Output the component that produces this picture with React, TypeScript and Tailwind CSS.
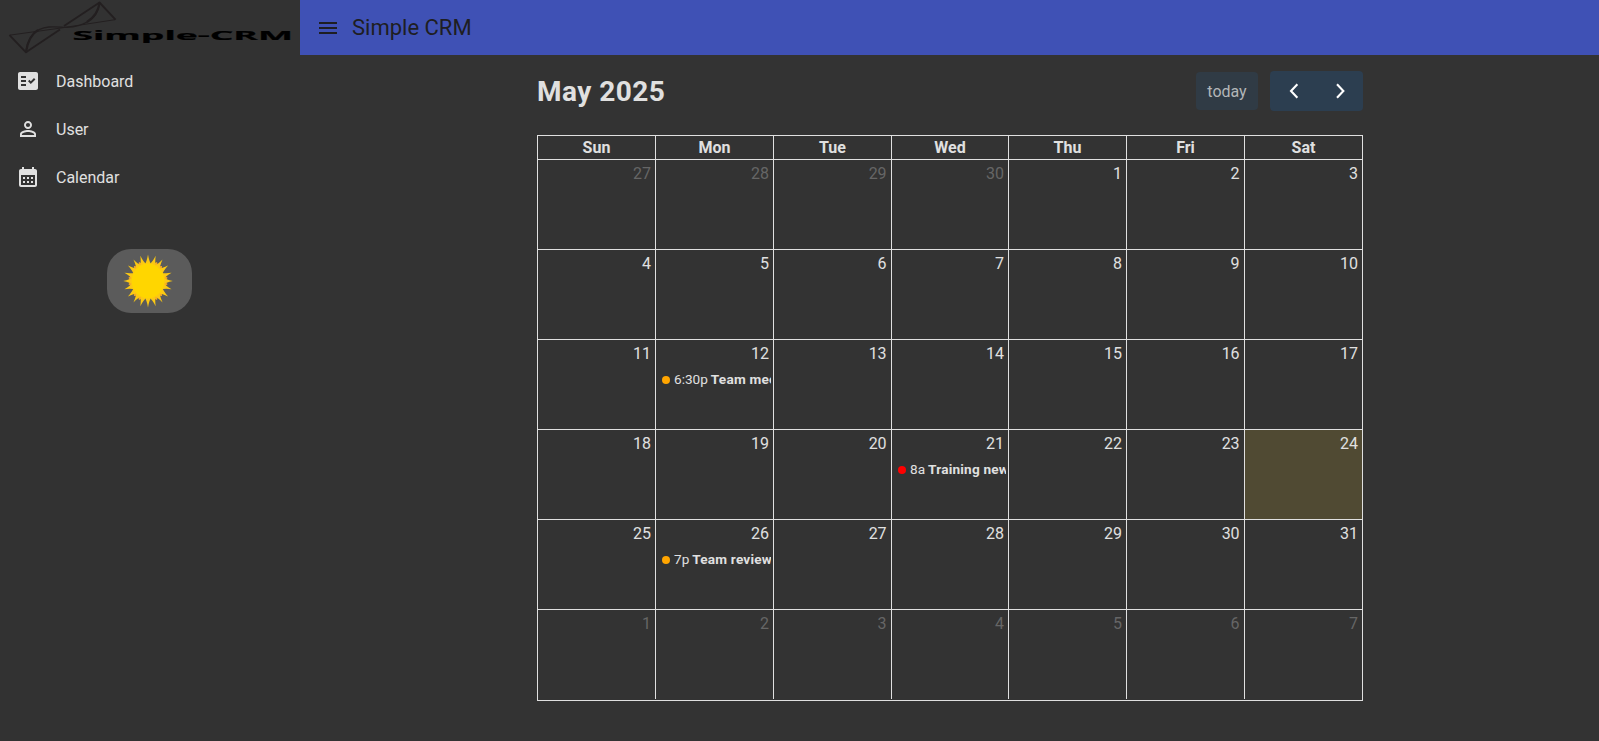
import React from "react";
import { MdFactCheck, MdPersonOutline, MdCalendarMonth, MdMenu } from "react-icons/md";

type CalendarEvent = { time: string; title: string; dot: string };

const weekdays = ["Sun", "Mon", "Tue", "Wed", "Thu", "Fri", "Sat"];

const events: Record<number, CalendarEvent> = {
  12: { time: "6:30p", title: "Team meeting", dot: "bg-[#ffa500]" },
  21: { time: "8a", title: "Training new staff", dot: "bg-[#ff0000]" },
  26: { time: "7p", title: "Team review", dot: "bg-[#ffa500]" },
};

const days = Array.from({ length: 42 }, (_, i) => {
  const offset = i - 3;
  if (offset < 1) return { day: 30 + offset, other: true };
  if (offset > 31) return { day: offset - 31, other: true };
  return { day: offset, other: false };
});
const weeks = Array.from({ length: 6 }, (_, w) => days.slice(w * 7, w * 7 + 7));

const columns = "grid grid-cols-[117px_117px_117px_116px_117px_117px_117px] gap-x-px";

function Logo() {
  return (
    <svg width="300" height="55" viewBox="0 0 300 55" fill="none" className="block">
      <g stroke="#231f20" strokeLinejoin="round">
        <path d="M9.5 35.2 L26 52.3 L60 29.5 M64 26 L99.5 2.5 L115.5 19.6" strokeWidth="1.9" />
        <path d="M9.5 35.2 L61 28 L115.5 19.6" strokeWidth="1" />
        <path d="M26 52 C27 40 33 28.5 49 27 C62 26 67 29.5 79 25.5 C93 21 98 14 99.5 3" strokeWidth="1.3" />
        <path d="M26 52 C27.5 43 31 34 38 30" strokeWidth="2.1" />
        <path d="M87 22 C95 17 98.5 10 99.5 3" strokeWidth="2.1" />
      </g>
      <text
        x="72.5"
        y="39.6"
        fontSize="12.4"
        fontWeight="700"
        fill="#000"
        stroke="#000"
        strokeWidth="0.2"
        textLength="220.5"
        lengthAdjust="spacingAndGlyphs"
        className="font-['Open_Sans',sans-serif]"
      >
        Simple-CRM
      </text>
    </svg>
  );
}

const rays = Array.from({ length: 20 }, (_, i) => i * 18);
const backRays = [27, 45, 81, 99, 135, 153].flatMap((a) => [a, -a]);

function Sun() {
  return (
    <svg width="50" height="54" viewBox="-25 -27 50 54" className="mr-[3px] block">
      <g transform="scale(1.02 1.09)">
        {backRays.map((a) => (
          <path key={a} d="M-4.5 -14 L0 -19.5 L4.5 -14 Z" fill="#f9a825" transform={`rotate(${a})`} />
        ))}
        {rays.map((a) => (
          <path key={a} d="M-3.6 -14.5 Q-1.2 -17.5 0 -24.3 Q1.2 -17.5 3.6 -14.5 Z" fill="#fcc913" transform={`rotate(${a})`} />
        ))}
        <circle r="16" fill="#ffd600" />
      </g>
    </svg>
  );
}

function NavItem({ icon, label }: { icon: React.ReactNode; label: string }) {
  return (
    <a className="flex h-12 items-center gap-4 px-4 text-base text-[#e0e0e0]">
      {icon}
      <span className="pt-[2px]">{label}</span>
    </a>
  );
}

function Chevron({ d }: { d: string }) {
  return (
    <svg width="24" height="24" viewBox="0 0 32 32" fill="none" stroke="#fff" strokeWidth="2.8">
      <path d={d} />
    </svg>
  );
}

export default function App() {
  return (
    <div className="flex h-[741px] w-[1599px] overflow-hidden bg-[#333333] font-[Roboto,sans-serif] text-[#e0e0e0]">
      <aside className="w-[300px] shrink-0 bg-[#323232]">
        <Logo />
        <nav className="pt-[2px]">
          <NavItem icon={<MdFactCheck size={24} />} label="Dashboard" />
          <NavItem icon={<MdPersonOutline size={24} />} label="User" />
          <NavItem icon={<MdCalendarMonth size={24} />} label="Calendar" />
        </nav>
        <button className="mt-12 ml-[107px] flex h-16 w-[85px] items-center justify-center rounded-3xl bg-[#5b5b5b]">
          <Sun />
        </button>
      </aside>

      <div className="flex flex-1 flex-col">
        <header className="flex h-[55px] shrink-0 items-center gap-3 bg-[#3f51b5] pl-4 text-[#1e1e22]">
          <MdMenu size={24} />
          <h1 className="text-[22px]">Simple CRM</h1>
        </header>

        <main className="ml-[237px] w-[826px]">
          <div className="flex h-[80px] items-center justify-between pb-[8px]">
            <h2 className="pt-[2px] text-[28px] font-bold tracking-[0.45px]">May 2025</h2>
            <div className="flex items-center gap-3">
              <button className="flex h-[38px] w-[62px] items-center justify-center rounded bg-[#303b45] pt-[2px] text-base text-[#b3b6b8]">
                today
              </button>
              <div className="flex h-10 w-[93px] items-center gap-[22px] rounded bg-[#2c3e50] pl-3">
                <Chevron d="M20.5 7 L12 16 L20.5 25" />
                <Chevron d="M12 7 L20.5 16 L12 25" />
              </div>
            </div>
          </div>

          <div className="h-[566px] border border-[#e0e0e0]">
            <div className={`${columns} h-[23px] bg-[#e0e0e0]`}>
              {weekdays.map((d) => (
                <div key={d} className="bg-[#333333] text-center text-base leading-[23px] font-bold">
                  {d}
                </div>
              ))}
            </div>
            {weeks.map((week, w) => (
              <div key={w} className={`${columns} h-[90px] bg-[#e0e0e0] pt-px`}>
                {week.map(({ day, other }, col) => {
                  const event = other ? undefined : events[day];
                  const today = !other && day === 24;
                  const inset = col === 2 || col === 5 ? "pr-[4.4px]" : "pr-1";
                  return (
                    <div key={day} className={`min-w-0 ${today ? "bg-[#504a33]" : "bg-[#333333]"}`}>
                      <div className={`pt-[2px] text-right text-base leading-6 ${inset} ${other ? "text-[#666666]" : ""}`}>
                        {day}
                      </div>
                      {event && (
                        <div className="mx-[2px] mt-[3px] flex h-[20px] items-center overflow-hidden text-[13.6px] whitespace-nowrap">
                          <span className={`mt-px mr-1 ml-1 size-2 shrink-0 rounded-full ${event.dot}`} />
                          <span className="mr-[3px]">{event.time}</span>
                          <span className="font-bold tracking-[0.2px]">{event.title}</span>
                        </div>
                      )}
                    </div>
                  );
                })}
              </div>
            ))}
          </div>
        </main>
      </div>
    </div>
  );
}
